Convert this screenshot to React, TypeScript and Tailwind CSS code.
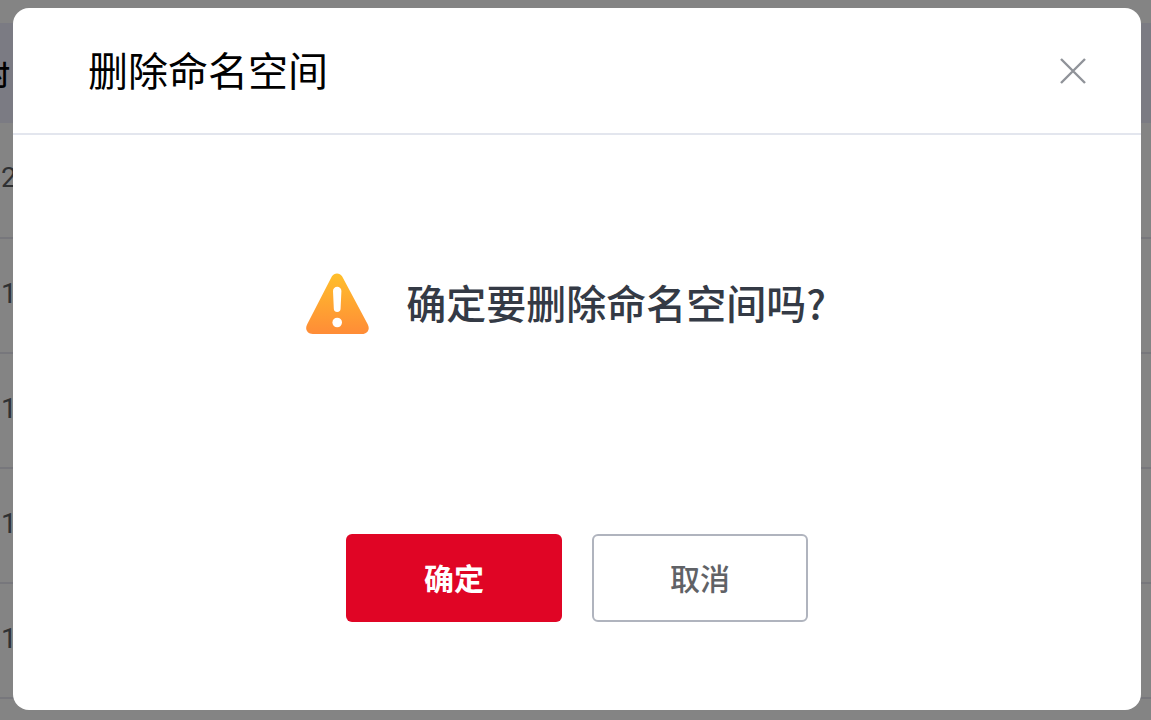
import React from "react";

type Row = {
  id: number;
  value: string;
};

const rows: Row[] = [
  { id: 1, value: "2" },
  { id: 2, value: "1" },
  { id: 3, value: "1" },
  { id: 4, value: "1" },
  { id: 5, value: "1" },
];

function NamespaceTable() {
  return (
    <table className="w-full table-fixed border-collapse text-[28px] leading-8 text-[#2f3133]">
      <thead>
        <tr className="h-[100px] bg-[#7b7b83]">
          <th className="p-0 pt-2 text-left font-medium text-black">
            <div className="flex w-[10px] justify-end">
              <span className="shrink-0">时</span>
            </div>
          </th>
        </tr>
      </thead>
      <tbody>
        {rows.map((row) => (
          <tr key={row.id} className="h-[115px] border-b-2 border-[#77777c]">
            <td className="p-0 pb-1 pl-px font-['Roboto',sans-serif]">{row.value}</td>
          </tr>
        ))}
      </tbody>
    </table>
  );
}

function WarningIcon() {
  return (
    <svg viewBox="0 0 64 62" className="h-[62px] w-16 shrink-0" aria-hidden="true">
      <defs>
        <linearGradient id="warning" x1="0" y1="0" x2="0" y2="1">
          <stop offset="0" stopColor="#ffbf2b" />
          <stop offset="1" stopColor="#ff8c37" />
        </linearGradient>
      </defs>
      <path
        d="M25.8 3.6C28.3-.5 33.7-.5 36.2 3.6L61.7 51.2C64.4 56.2 61.5 61 56.1 61H6.8C1.3 61-1.5 56.2 1.2 51.2Z"
        fill="url(#warning)"
      />
      <path d="M27 18a4.2 4.2 0 0 1 8.4 0L34.6 35.5a3.4 3.4 0 0 1-6.8 0Z" fill="#fff" />
      <circle cx="31.2" cy="49.5" r="4.8" fill="#fff" />
    </svg>
  );
}

function ConfirmDialog() {
  return (
    <div
      role="dialog"
      aria-modal="true"
      aria-labelledby="dialog-title"
      className="w-full rounded-2xl bg-white"
    >
      <div className="flex items-center justify-between border-b-2 border-[#e3e6ee] pr-[54px] pl-[75px]">
        <h2 id="dialog-title" className="pt-9 pb-8 text-[40px] leading-[57px] text-black">
          删除命名空间
        </h2>
        <button type="button" aria-label="关闭" className="text-[#909399]">
          <svg viewBox="0 0 28 28" className="h-7 w-7" fill="none" stroke="currentColor">
            <path d="M2 2L26 26M26 2L2 26" strokeWidth="2.4" />
          </svg>
        </button>
      </div>

      <div className="flex items-center justify-center gap-9 pt-[135px] pr-[22px] pb-[196px]">
        <WarningIcon />
        <p className="pb-1 font-['Noto_Sans_CJK_SC',sans-serif] text-[40px] leading-[64px] font-medium text-[#343a45]">
          确定要删除命名空间吗?
        </p>
      </div>

      <div className="flex justify-center gap-[30px] pb-[88px] text-[30px] leading-10">
        <button
          type="button"
          className="h-[88px] w-[216px] rounded-md bg-[#e00525] pt-1 font-bold text-white"
        >
          确定
        </button>
        <button
          type="button"
          className="h-[88px] w-[216px] rounded-md border-2 border-[#b0b4be] bg-white pt-1 font-medium text-[#606266]"
        >
          取消
        </button>
      </div>
    </div>
  );
}

export default function App() {
  return (
    <div className="h-screen overflow-hidden bg-[#848484] pt-[23px] font-['Liberation_Sans','Noto_Sans_CJK_SC',sans-serif]">
      <NamespaceTable />
      <div className="fixed inset-0 flex items-start pt-2 pr-[10px] pl-[13px]">
        <ConfirmDialog />
      </div>
    </div>
  );
}
